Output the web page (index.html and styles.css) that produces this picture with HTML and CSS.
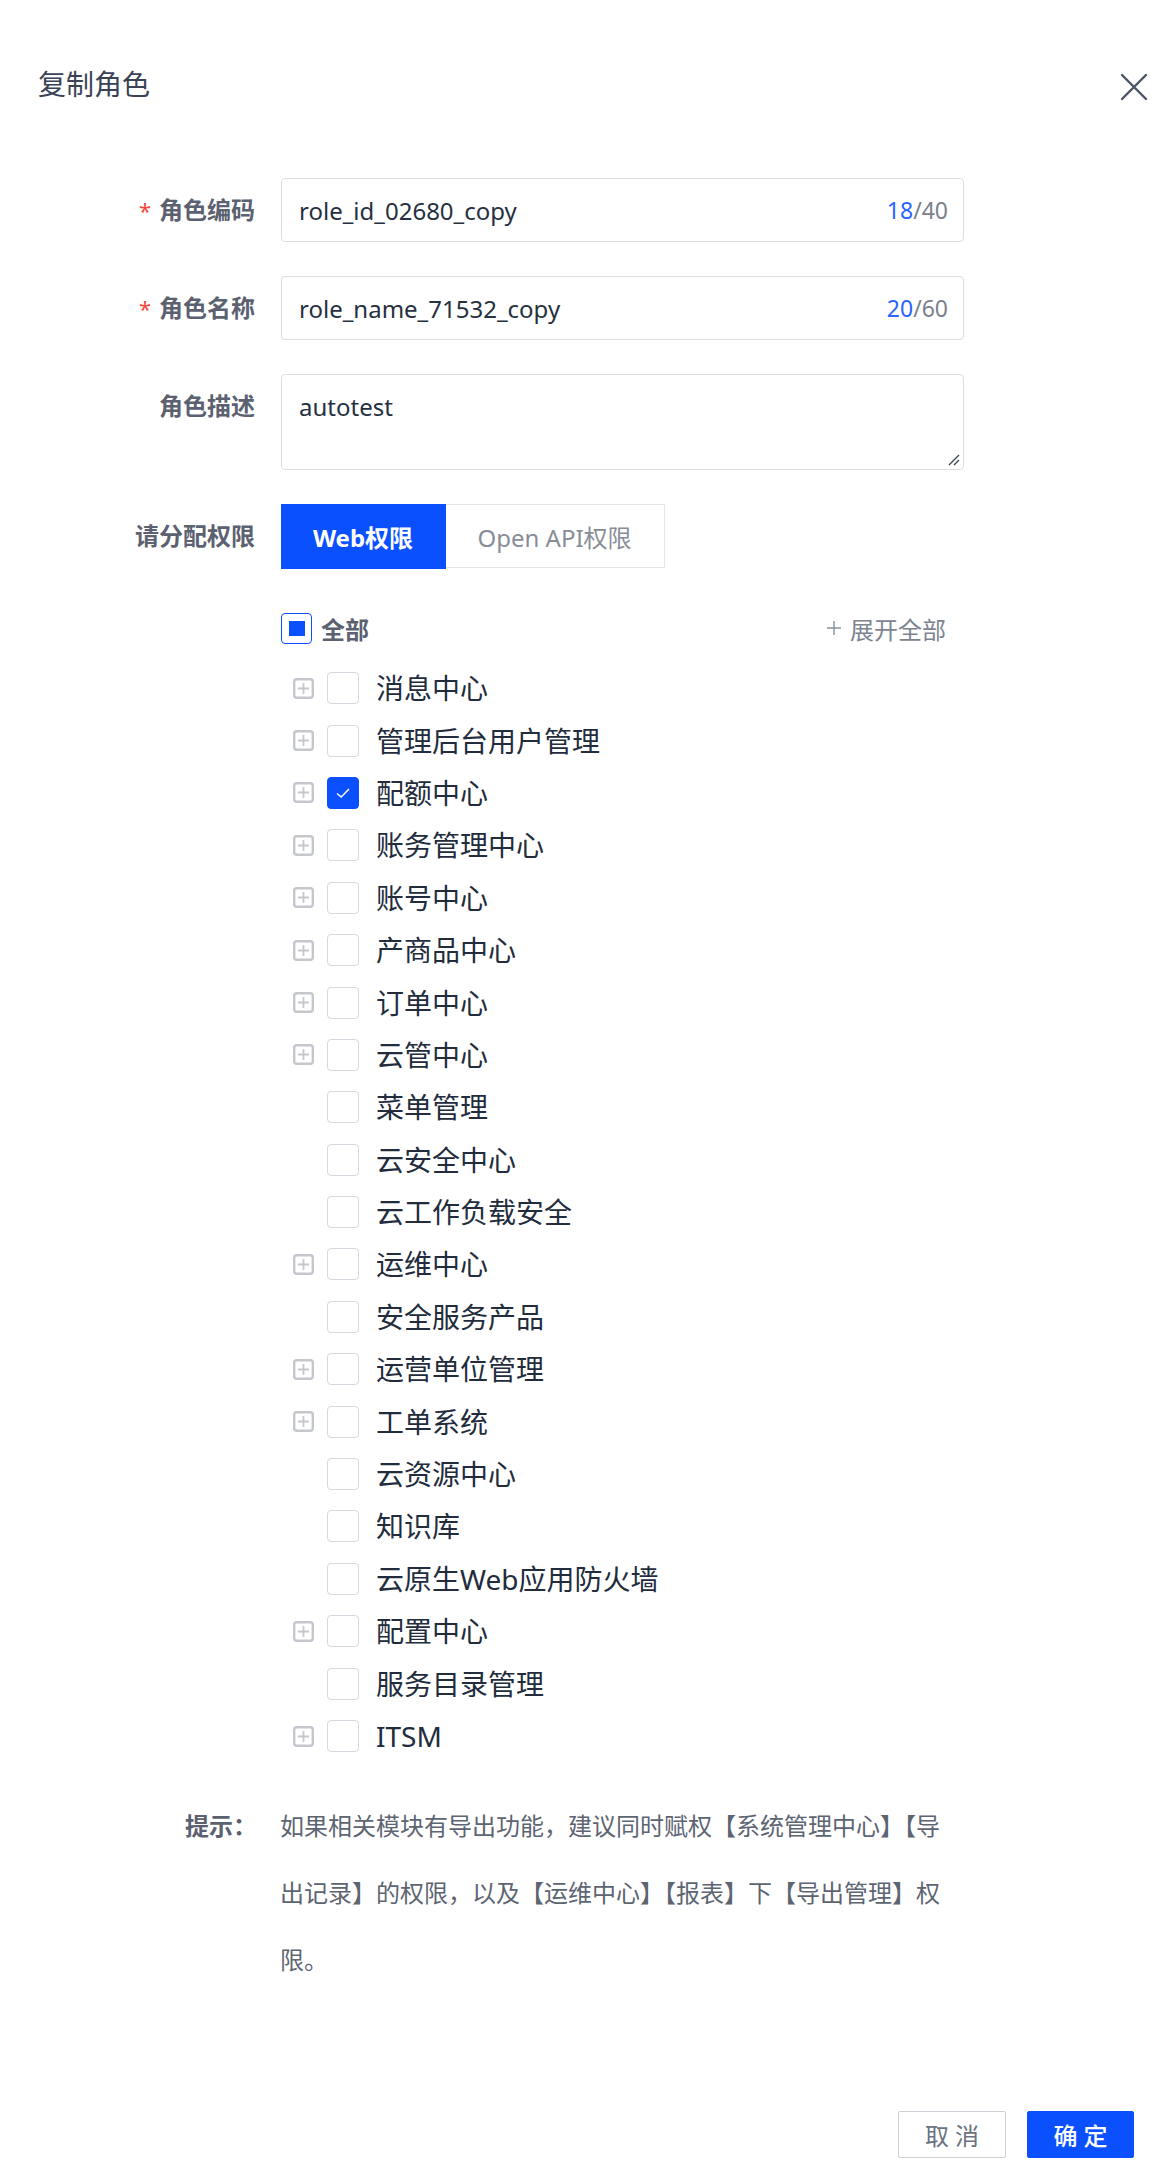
FILE: index.html
```html
<!DOCTYPE html>
<html lang="zh-CN">
<head>
    <meta charset="utf-8">
    <title>复制角色</title>
    <link rel="stylesheet" href="styles.css">
</head>
<body>
    <div class="dialog">
        <div class="dialog-header">
            <h2 class="dialog-title">复制角色</h2>
            <button class="close" type="button" aria-label="关闭">
                <svg width="28" height="28" viewBox="0 0 28 28">
                    <path d="M2 2 L26 26 M26 2 L2 26" stroke="#4b5366" stroke-width="2.4" stroke-linecap="round"/>
                </svg>
            </button>
        </div>

        <form class="form" id="roleForm">
            <div class="form-row">
                <label class="form-label" for="roleCode"><span class="required">*</span>角色编码</label>
                <div class="field">
                    <input type="text" id="roleCode" value="role_id_02680_copy">
                    <span class="counter"><em>18</em>/40</span>
                </div>
            </div>
            <div class="form-row">
                <label class="form-label" for="roleName"><span class="required">*</span>角色名称</label>
                <div class="field">
                    <input type="text" id="roleName" value="role_name_71532_copy">
                    <span class="counter"><em>20</em>/60</span>
                </div>
            </div>
            <div class="form-row">
                <label class="form-label" for="roleDesc">角色描述</label>
                <div class="area-wrap">
                    <textarea class="field-area" id="roleDesc">autotest</textarea>
                    <svg class="grip" width="14" height="14" viewBox="0 0 14 14">
                        <path d="M13 3 L3 13 M13 8 L8 13" stroke="#3c4454" stroke-width="1.4"/>
                    </svg>
                </div>
            </div>
            <div class="form-row">
                <span class="form-label">请分配权限</span>
                <div class="tabs">
                    <div class="tab active">Web权限</div>
                    <div class="tab">Open API权限</div>
                </div>
            </div>

            <div class="tree">
                <div class="tree-head">
                    <label class="check-all">
                        <span class="checkbox indeterminate"></span>
                        <span>全部</span>
                    </label>
                    <span class="expand-all">
                        <svg width="16" height="16" viewBox="0 0 16 16">
                            <path d="M8 1 V15 M1 8 H15" stroke="#8a909c" stroke-width="1.4"/>
                        </svg>
                        展开全部
                    </span>
                </div>
                <ul class="tree-list" id="treeList"></ul>
            </div>

            <div class="hint">
                <span class="hint-label">提示：</span>
                <p class="hint-text">如果相关模块有导出功能，建议同时赋权【系统管理中心】【导出记录】的权限，以及【运维中心】【报表】下【导出管理】权限。</p>
            </div>
        </form>

        <div class="dialog-footer">
            <button type="button" class="btn">取 消</button>
            <button type="submit" class="btn btn-primary" form="roleForm">确 定</button>
        </div>
    </div>

    <script>
        const modules = [
            { name: '消息中心', children: true },
            { name: '管理后台用户管理', children: true },
            { name: '配额中心', children: true, checked: true },
            { name: '账务管理中心', children: true },
            { name: '账号中心', children: true },
            { name: '产商品中心', children: true },
            { name: '订单中心', children: true },
            { name: '云管中心', children: true },
            { name: '菜单管理' },
            { name: '云安全中心' },
            { name: '云工作负载安全' },
            { name: '运维中心', children: true },
            { name: '安全服务产品' },
            { name: '运营单位管理', children: true },
            { name: '工单系统', children: true },
            { name: '云资源中心' },
            { name: '知识库' },
            { name: '云原生Web应用防火墙' },
            { name: '配置中心', children: true },
            { name: '服务目录管理' },
            { name: 'ITSM', children: true }
        ];

        const expander = '<svg width="21" height="21" viewBox="0 0 21 21">' +
            '<rect x="1.2" y="1.2" width="18.6" height="18.6" rx="2.5" fill="none" stroke="#c4c7ce" stroke-width="2.4"/>' +
            '<path d="M10.5 5 V16 M5 10.5 H16" stroke="#c4c7ce" stroke-width="1.8"/></svg>';

        const tick = '<svg width="20" height="20" viewBox="0 0 20 20">' +
            '<path d="M4 10.5 L8.2 14 L16 6" fill="none" stroke="#fff" stroke-width="1.5"/></svg>';

        const list = document.getElementById('treeList');
        modules.forEach(function(item) {
            const li = document.createElement('li');
            li.className = 'tree-item';
            li.innerHTML =
                '<span class="expander' + (item.children ? '' : ' empty') + '">' + expander + '</span>' +
                '<span class="checkbox' + (item.checked ? ' checked' : '') + '">' + (item.checked ? tick : '') + '</span>' +
                '<span class="tree-label">' + item.name + '</span>';
            list.appendChild(li);
        });
    </script>
</body>
</html>
```

FILE: styles.css
```css
body {
    margin: 0;
    background: #fff;
    font-family: "Noto Sans", "Noto Sans CJK SC", sans-serif;
    color: #2b3648;
}

.dialog {
    height: 2180px;
    box-sizing: border-box;
    display: flex;
    flex-direction: column;
}

.dialog-header {
    display: flex;
    justify-content: space-between;
    align-items: center;
    padding: 66px 16px 0 38px;
}

.dialog-title {
    margin: 0;
    font-size: 28px;
    line-height: 36px;
    font-weight: normal;
    color: #3a4356;
}

.close {
    border: none;
    background: none;
    padding: 0;
    margin-top: 6px;
    width: 28px;
    height: 28px;
    cursor: pointer;
}

.form {
    padding-top: 76px;
}

.form-row {
    display: flex;
    align-items: flex-start;
    margin-bottom: 34px;
}

.form-label {
    width: 281px;
    flex-shrink: 0;
    box-sizing: border-box;
    padding-right: 26px;
    text-align: right;
    font-size: 24px;
    line-height: 64px;
    font-weight: bold;
    color: #5b6170;
}

.required {
    color: #f5483b;
    font-weight: normal;
    font-size: 22px;
    margin-right: 8px;
}

.field {
    width: 683px;
    height: 64px;
    box-sizing: border-box;
    border: 1.5px solid #dadde4;
    border-radius: 4px;
    display: flex;
    align-items: center;
    padding: 0 15px 0 17px;
}

.field input {
    flex: 1;
    border: none;
    outline: none;
    padding: 0;
    font-family: inherit;
    font-size: 24px;
    color: #26303f;
    background: transparent;
}

.counter {
    font-size: 23px;
    color: #7a808c;
}

.counter em {
    font-style: normal;
    color: #2a63ff;
}

.area-wrap {
    position: relative;
    display: flex;
}

.field-area {
    width: 683px;
    height: 96px;
    box-sizing: border-box;
    border: 1.5px solid #dadde4;
    border-radius: 4px;
    padding: 16px 17px;
    font-family: inherit;
    font-size: 24px;
    line-height: 32px;
    color: #26303f;
    resize: none;
    outline: none;
}

.grip {
    position: absolute;
    right: 4px;
    bottom: 4px;
}

.tabs {
    display: flex;
    border: 1.5px solid #e4e6eb;
    height: 64px;
    box-sizing: border-box;
}

.tab {
    display: flex;
    align-items: center;
    justify-content: center;
    font-size: 24px;
    color: #878d98;
    width: 218px;
}

.tab.active {
    width: 165px;
    margin: -1.5px 0 -1.5px -1.5px;
    background: #0a50ff;
    color: #fff;
    font-weight: bold;
}

.tree {
    margin-left: 281px;
    width: 683px;
}

.tree-head {
    display: flex;
    justify-content: space-between;
    align-items: center;
    height: 52px;
    margin: 3px 18px 8px 0;
}

.check-all {
    display: flex;
    align-items: center;
    gap: 9px;
    font-size: 24px;
    font-weight: bold;
    color: #5b6170;
}

.expand-all {
    display: flex;
    align-items: center;
    gap: 8px;
    font-size: 24px;
    color: #7d838f;
}

.checkbox {
    width: 32px;
    height: 32px;
    box-sizing: border-box;
    border: 1.5px solid #d5d8de;
    border-radius: 4px;
    background: #fff;
    display: flex;
    align-items: center;
    justify-content: center;
    flex-shrink: 0;
}

.checkbox.indeterminate {
    width: 31px;
    height: 31px;
    border-color: #0a50ff;
}

.checkbox.indeterminate::after {
    content: "";
    width: 16px;
    height: 15px;
    background: #0a50ff;
}

.checkbox.checked {
    background: #0a50ff;
    border-color: #0a50ff;
}

.tree-list {
    list-style: none;
    margin: 0;
    padding: 0;
}

.tree-item {
    display: flex;
    align-items: center;
    height: 52.4px;
}

.expander {
    display: flex;
    width: 21px;
    margin: 0 13px 0 12px;
}

.expander.empty {
    visibility: hidden;
}

.tree-label {
    margin-left: 17px;
    font-size: 28px;
    line-height: 34px;
    color: #222c3d;
}

.hint {
    display: flex;
    margin-top: 30px;
    font-size: 24px;
    line-height: 67px;
}

.hint-label {
    width: 280px;
    flex-shrink: 0;
    box-sizing: border-box;
    padding-left: 185px;
    font-weight: bold;
    color: #5b6170;
}

.hint-text {
    margin: 0;
    width: 683px;
    color: #5d6472;
}

.dialog-footer {
    margin-top: auto;
    display: flex;
    justify-content: flex-end;
    gap: 21px;
    padding: 0 30px 22px 0;
}

.btn {
    width: 108px;
    height: 47px;
    border: 1.5px solid #cdd0d6;
    border-radius: 2px;
    background: #fff;
    color: #6b7280;
    font-family: inherit;
    font-size: 24px;
    cursor: pointer;
}

.btn-primary {
    width: 107px;
    border-color: #0a50ff;
    background: #0a50ff;
    color: #fff;
    font-weight: 500;
}
```
